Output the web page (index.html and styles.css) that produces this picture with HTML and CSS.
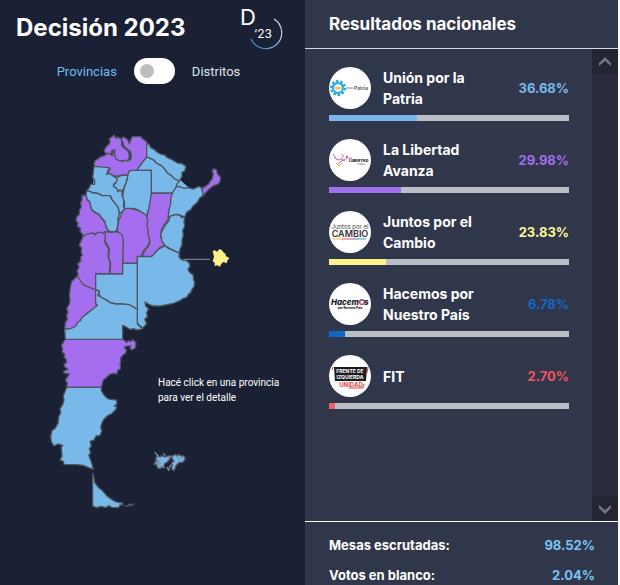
FILE: index.html
```
<!DOCTYPE html>
<html lang="es">
<head>
  <meta charset="UTF-8" />
  <meta name="viewport" content="width=device-width, initial-scale=1.0" />
  <title>Decisión 2023</title>
  <link rel="stylesheet" href="styles.css">
</head>
<body>
  <div class="container">
    <section class="map-panel">
      <header class="map-header">
        <h1>Decisión 2023</h1>
        <svg class="brand" viewBox="0 0 42 42" width="42" height="42" role="img" aria-label="D 23">
          <defs>
            <linearGradient id="ring" x1="0" y1="1" x2="1" y2="0">
              <stop offset="0" stop-color="#2f7fd0" />
              <stop offset="1" stop-color="#e4edf8" />
            </linearGradient>
          </defs>
          <path d="M33 11A16 16 0 1 1 10 31" fill="none" stroke="url(#ring)" stroke-width="1.2" />
          <text x="-1" y="17" class="brand-d">D</text>
          <text x="13" y="30" class="brand-year">‘23</text>
        </svg>
      </header>

      <div class="switch-row">
        <label for="view-switch" class="active">Provincias</label>
        <input type="checkbox" id="view-switch" class="switch" />
        <label for="view-switch">Distritos</label>
      </div>

      <div class="map-area">
        <svg class="map" viewBox="-6 15 570 1155" width="190" height="385">
          <!-- relleno bajo las uniones entre provincias -->
          <path class="base" d="M136 132L240 132 290 64 385 160 430 200 393 270 386 370 400 480 262 530 218 600 60 600 90 480 112 340 94 300 122 220z" />
          <g class="lla">
            <!-- Jujuy, Salta -->
            <path d="M166 84l-4-6 6-12 10-10 2-6-2-10 8-4 6-6 6 10 6-4 8 6 4 4-2 12 4 8 8 6 10 8 2 16-3 8-7 4-10-2-8 4-10-4-8-4-4-10 0-18-4 6-2 12z" />
            <path d="M214 40l6-4 8 4 6 6 4 10 6-16 4-5 24 0 6 6 12 9v46l-30 40-22 2-6 14-14-2-20 4-14-4-10-2 4-14 2-4-46-4-2-10 4-10 8-4 6-6 14-4 8-8 16 8 2-12 4-6 0 18 4 10 8 4 10 4 8-4 10 2 7-4 3-8-2-16-10-8-8-6-4-8z" />
            <!-- Misiones -->
            <path d="M456 190l10-6 9-6 6-10 5-5 4-16-4-10 6-6 8 4 2 11 9 10 0 8-3 10-10 6-8 2-10 8-12 12-8 10-6-10z" />
            <!-- San Juan -->
            <path d="M108 210l4 16 8 6 2 14 4 10 10 8 12 6 8 12 8 8 4 14 6 14 0 4-12 2-8 4-6-4-10 8-6-6-12 2-10 2-10 8-2-10-8-8 2-10-10-6 2-10-6-8 2-10 8-8 0-12 6-10-2-12 4-10 0-12z" />
            <!-- Córdoba, San Luis -->
            <path d="M222 250l18 0 12 4 14 2 8 6 8 2 10 8 6 14-4 10 4 14 0 12 4 18-4 12-10 18-8 8-6 16h-12v21h-44v-65l-14-20-2-20 4-24 6-12z" />
            <path d="M164 320l18 2 22-2 12 10 4 15-2 70v32h-38l2-32-6-20 2-23-6-14-6-8z" />
            <!-- Mendoza -->
            <path d="M98 336l10-8 10-2 12-2 6 6 6-8 10 0 6 4 6-6 2 16-2 14 6 14 6 8-2 23 6 20-2 32h-41v48l-20-8-18-8-10-14-8-10 4-8-4-8 6-14-4-8 10-10-2-10 6-6-4-10 2-12-8-8 4-8z" />
            <!-- Santa Fe -->
            <path d="M304 204h68l-4 14 0 14-6 14 0 16-4 14-8 14-10 12-6 14-2 14 4 18 9 14-14 4-6 6-20 22h-29l10-20 10-10 4-14-6-24 0-14-4-14 4-10-4-10 4-20 4-28z" />
            <!-- Neuquén -->
            <path d="M82 453l8 12 10 15 37 15v42l5 6-12 10-14 8-12 10-10 12-4 8-10 14-8 2-6 8-12-4-10 2 2-20 6-10-2-12 4-10-4-10 8-14 2-10-2-14 2-20 4-22z" />
            <!-- Chubut -->
            <path d="M46 643h174l10 10 4-6 10 2 4-6 10 10-2 16-10 6-6-4 2-8-10 0-10 4 8 8-4 10-8 6-6 8 0 12-2 8 2 12-8 4-4 12-10-2-12 4-10 10-8 6-6 22H50l2-12-6-10 6-8 6-10-14-2-4-6 14-6-10-8-2-8 8-4-2-10-6-6 2-10-8-6 2-10-4-10z" />
          </g>
          <g class="up">
            <!-- Formosa, Chaco -->
            <path d="M290 52l8 8 4 8 12 6 8 8 12 6 10 2 8 8 14 6 16 10 14 2 12 8-4 14-8 4 0 12-8 14-14-6-10-10-12-8-10-14-8-8-16-8-6-8-12-6-10-4z" />
            <path d="M290 96l10 4 12 6 6 8 16 8 8 8 10 14 12 8 10 10 14 6-8 10-2 12-6 14h-68v-68h-44z" />
            <!-- Santiago del Estero, Tucumán -->
            <path d="M238 138l6-2h60v68l-4 28-4 20-6 20-10-8-8-4-10-6-12-4-10 0-18 0 2-14-6-20 4-26 8-22 2-16z" />
            <path d="M196 154l10 2 6-4 22-2-4 18-6 14-4 10-4 10-6-6-4 6-6-10-10-6 2-8 6-4 0-8-4-6z" />
            <!-- Catamarca, La Rioja -->
            <path d="M132 124l46 4-6 14-2 6 10-2 8 6 6 4 8 6-2 8-8 6-2 8 10 6 4 10 6-6 6 6 0 12 4 8 2 12-2 10 4 10-8 8-8 6-2-12-4-10-8-10-8-10-6-12-10 0-14 0-6-4-12-4-10 0-6-4-12-2 8-10 4-10 12 0 0-12-6-8z" />
            <path d="M110 198l12 2 6 4 10 0 12 4 6 4 14 0 10 0 6 12 8 10 8 10 4 10 2 14-4 12 0 16-4 20-6 4-12 0-8-4-6-14-4-14-8-8-8-12-12-6-10-8-4-10-2-14-8-6-4-16z" />
            <!-- Corrientes, Entre Ríos -->
            <path d="M380 184l12 2 10 4 12-2 16 4 10-4 6-4 8 4 4 14 0 10-8 6-8 14-12 10-8 12-12 8-6 14-14-6-12-2-24 8 4-26 4-14 0-14 6-20z" />
            <path d="M360 274l18-6 12 4 6 6 8-2-2 14 2 14-6 12 2 14-4 16 0 14-6 12-2 12-12-6-14-6-17-10-9-14-4-20 6-14 10-16 8-10z" />
            <!-- Buenos Aires, La Pampa -->
            <path d="M262 395h43l20-22 8-4 12-6 12 8 14 6 17 8-2 10 10 10 14 2 8 8 2 8-6 10 4 8 12 10 0 10 4 12-2 12-6 8-4 10-6 4-6 10-12 4-8 6-20 8-18 4-22 4-20 0-12-4-13-8 2 12 9 8-6 12 2 12-8 8 6 12-6 8-6 5-8-6-8-8z" />
            <path d="M137 447h81v-32h44v138l-24-12-20-4-20 0-18-4-14-10-14-6-6-14 2-6-11-2z" />
            <!-- Río Negro -->
            <path d="M137 495l9 2 0 8-2 6 10 6 12 6 14 10 18 4 20 0 20 2 24 14v44l8 8 8 6-16 4-12-4-10 2-14-8-8-4v42H46l-2-30 18-2 8-4 8-4 6-12 8-4 4-10 14-10 10-8 22-18-5-6z" />
            <!-- Santa Cruz, Tierra del Fuego -->
            <path d="M50 787h104l0 10 6 10 10 12 10 4 20 2 0 14-8 4 8 2-2 8-14 14-10 4-14 14-6 14-2 10 4 8-6 14-12 2-6 12-12 4 4 14-6 8 4 12-6 8 8 20 6 22-16-6-14-6-20-2H42l-2-10-10-4 6-12-2-26 4-6-14-4-12 6-8-12-2-16 4-18 10-8 8-14 2-20 6-12-2-12 8-12 4-14-2-12z" />
            <path d="M128 1045l4 12 2 15 10 14 12 10 16 18 20 14 12 4 14 2 0 6-8 0-4 8-20 0-8-6-12 6-12-4-14 4-12-5z" />
            <path d="M226 1143l8-2 4-5 4 4 10-3-8 5-12 0z" />
            <!-- Malvinas -->
            <path d="M320 992l10 4 4-4 10 4 12-4 6 4-8 14-10 6-4 12-8-2-8 4-4-10-8-2 4-8 8-2-6-6z" />
            <path d="M366 994l10-6 6 4 6-4 6 6 8-2 4 10-8 10-10 0-10 10-6 16-8-8 4-10-4-6 8-6-6-6z" />
            <path class="islets" d="M314 982l12 12M316 1004l10 4-8 6 8 4 6-6M322 1024l8 6 6-6 8 4M340 984l6 10M352 1008l8-12 6-4M350 1026l6 10 4-14 6-2M380 992l8 12M390 1008l-8 6M394 994l2 10" />
          </g>
          <!-- Capital Federal -->
          <path class="guide" d="M400 403h80" />
          <path class="jxc" d="M488 378l6-2 8 4 6-8 8 4 4 6 6 4 2 8 10 5-6 8-2 8-10-4-6 6-4 8-8-4-8 2 0-10-6-4 4-14z" />
        </svg>
        <p class="hint">Hacé click en una provincia para ver el detalle</p>
      </div>
    </section>

    <section class="results-panel">
      <h2>Resultados nacionales</h2>

      <div class="results-body">
        <ul class="results">
          <li class="up">
            <div class="party">
              <svg class="logo" viewBox="0 0 42 42" width="42" height="42">
                <circle cx="21" cy="21" r="21" fill="#fff" />
                <circle cx="9" cy="21" r="7" fill="none" stroke="#1ba3de" stroke-width="2" stroke-dasharray="2.4 2" />
                <circle cx="9" cy="21" r="5" fill="none" stroke="#35aee3" stroke-width="2.4" />
                <ellipse cx="9" cy="21" rx="3" ry="1.6" fill="#f3c34b" />
                <path d="M17 21h7" stroke="#888" stroke-width="1" />
                <text x="25" y="23" font-size="5" font-weight="700" fill="#666">Patria</text>
              </svg>
              <span class="name">Unión por la Patria</span>
              <span class="percent">36.68%</span>
            </div>
            <div class="bar"><div class="fill" style="width: 36.68%"></div></div>
          </li>
          <li class="lla">
            <div class="party">
              <svg class="logo" viewBox="0 0 42 42" width="42" height="42">
                <circle cx="21" cy="21" r="21" fill="#fff" />
                <g fill="none" stroke-width="1">
                  <path d="M4 15l4 6 5-1 3 2" stroke="#a877d6" />
                  <path d="M5 19l6 2 4-4-3-2" stroke="#d58ac6" />
                  <path d="M8 26l4-4 3-1 4-3" stroke="#e8629a" />
                  <path d="M7 24l3 3 3-3" stroke="#f0a33c" />
                </g>
                <circle cx="18" cy="18" r="1.2" fill="#d9459c" />
                <text x="20" y="20" font-size="2" font-weight="700" fill="#222">LA</text>
                <text x="20" y="23" font-size="4" font-weight="800" fill="#222">LIBERTAD</text>
                <text x="28" y="26" font-size="2" fill="#444">AVANZA</text>
              </svg>
              <span class="name">La Libertad Avanza</span>
              <span class="percent">29.98%</span>
            </div>
            <div class="bar"><div class="fill" style="width: 29.98%"></div></div>
          </li>
          <li class="jxc">
            <div class="party">
              <svg class="logo" viewBox="0 0 42 42" width="42" height="42">
                <circle cx="21" cy="21" r="21" fill="#fff" />
                <text x="21" y="18" font-size="6" text-anchor="middle" fill="#444">Juntos por el</text>
                <text x="21" y="26" font-size="9" font-weight="600" text-anchor="middle" fill="#333">CAMBIO</text>
                <path d="M4 28h9" stroke="#f5b93c" />
                <path d="M13 28h8" stroke="#e8564c" />
                <path d="M21 28h8" stroke="#8a58b5" />
                <path d="M29 28h8" stroke="#38a3db" />
              </svg>
              <span class="name">Juntos por el Cambio</span>
              <span class="percent">23.83%</span>
            </div>
            <div class="bar"><div class="fill" style="width: 23.83%"></div></div>
          </li>
          <li class="hnp">
            <div class="party">
              <svg class="logo" viewBox="0 0 42 42" width="42" height="42">
                <circle cx="21" cy="21" r="21" fill="#fff" />
                <text x="2" y="22" font-size="8" font-weight="800" font-style="italic" fill="#1a1a1a">Hacem</text>
                <circle cx="33" cy="19" r="2.4" fill="none" stroke="#e2453c" stroke-width="1.4" />
                <path d="M31 18a2.4 2.4 0 0 1 4 0" fill="none" stroke="#2d8fd4" stroke-width="1.4" />
                <text x="35" y="22" font-size="8" font-weight="800" font-style="italic" fill="#1a1a1a">s</text>
                <text x="21" y="26" font-size="3" font-weight="800" text-anchor="middle" fill="#222">por Nuestro País</text>
              </svg>
              <span class="name">Hacemos por Nuestro País</span>
              <span class="percent">6.78%</span>
            </div>
            <div class="bar"><div class="fill" style="width: 6.78%"></div></div>
          </li>
          <li class="fit">
            <div class="party">
              <svg class="logo" viewBox="0 0 42 42" width="42" height="42">
                <circle cx="21" cy="21" r="21" fill="#fff" />
                <path d="M5 12h33l-1 14H6z" fill="#1c1c1f" />
                <path d="M4 12l-1 3M39 12l-1 6M35 29l-1 4H20" fill="none" stroke="#e04545" />
                <text x="21" y="18" font-size="5" font-weight="700" text-anchor="middle" fill="#fff">FRENTE DE</text>
                <text x="21" y="24" font-size="5" font-weight="700" text-anchor="middle" fill="#fff">IZQUIERDA</text>
                <text x="22" y="32" font-size="6" font-weight="700" text-anchor="middle" fill="#e04545">UNIDAD</text>
              </svg>
              <span class="name">FIT</span>
              <span class="percent">2.70%</span>
            </div>
            <div class="bar"><div class="fill" style="width: 2.7%"></div></div>
          </li>
        </ul>

        <div class="scroller">
          <button type="button" aria-label="Subir">
            <svg viewBox="0 0 14 12" width="14" height="12"><path d="M1 10V7l6-6 6 6v3L7 5z" /></svg>
          </button>
          <button type="button" aria-label="Bajar">
            <svg viewBox="0 0 14 12" width="14" height="12"><path d="M1 2v3l6 6 6-6V2L7 7z" /></svg>
          </button>
        </div>
      </div>

      <dl class="totals">
        <div class="total">
          <dt>Mesas escrutadas:</dt>
          <dd>98.52%</dd>
        </div>
        <div class="total">
          <dt>Votos en blanco:</dt>
          <dd>2.04%</dd>
        </div>
      </dl>
    </section>
  </div>
</body>
</html>
```
FILE: styles.css
```
* {
  box-sizing: border-box;
}

body {
  margin: 0;
  background-color: #fff;
  color: #fff;
  font-family: Inter, "Liberation Sans", sans-serif;
}

h1,
h2,
p,
ul,
dl,
dd {
  margin: 0;
  padding: 0;
}

.container {
  display: grid;
  grid-template-columns: 305fr 313fr;
  min-height: 100vh;
  margin-right: 2px;
}

/* map */
.map-panel {
  background-color: #1a2135;
}

.map-header {
  display: flex;
  justify-content: space-between;
  padding: 8px 22px 0 16px;
}

h1 {
  font-size: 24px;
  line-height: 40px;
  font-weight: 700;
}

.brand {
  fill: #fff;
  overflow: visible;
}

.brand-d {
  font-size: 22px;
}

.brand-year {
  font-size: 12px;
}

.switch-row {
  display: flex;
  justify-content: center;
  align-items: center;
  gap: 17px;
  margin: 8px 8px 0 0;
  font-family: Roboto, sans-serif;
  font-size: 13px;
}

.switch-row label {
  color: #dfe3ea;
}

.switch-row .active {
  color: #6fbcec;
}

.switch {
  appearance: none;
  display: flex;
  align-items: center;
  width: 41px;
  height: 26px;
  margin: 0;
  padding: 0 6px;
  border-radius: 13px;
  background-color: #fff;
  cursor: pointer;
}

.switch::before {
  content: "";
  width: 14px;
  height: 14px;
  border-radius: 50%;
  background-color: #bdbdbd;
}

.switch:checked {
  justify-content: flex-end;
}

.map-area {
  position: relative;
  padding: 46px 0 0 48px;
}

.map {
  display: block;
  stroke: #50545f;
  stroke-width: 4;
  stroke-linejoin: round;
}

.map path {
  cursor: pointer;
}

.map .base {
  fill: #78b9ea;
  stroke: none;
}

.map .up {
  fill: #78b9ea;
}

.map .lla {
  fill: #a56eee;
}

.map .jxc {
  fill: #fff08a;
  stroke: none;
}

.map .guide {
  stroke: #8b909c;
  stroke-width: 3;
}

.map .islets {
  fill: none;
  stroke: #7d8894;
}

.hint {
  position: absolute;
  left: 158px;
  top: 291px;
  width: 130px;
  font-family: Roboto, sans-serif;
  font-size: 10px;
  line-height: 15px;
}

/* results */
.results-panel {
  display: flex;
  flex-direction: column;
  background-color: #31374a;
}

h2 {
  padding: 0 24px;
  border-bottom: 1px solid #d5d8e4;
  font-size: 17px;
  line-height: 48px;
  font-weight: 700;
}

.results-body {
  display: flex;
  flex: 1;
}

.results {
  display: flex;
  flex: 1;
  flex-direction: column;
  gap: 18px;
  padding: 18px 23px 18px 24px;
  list-style: none;
}

.party {
  display: flex;
  align-items: center;
  gap: 12px;
  min-height: 42px;
  margin-bottom: 6px;
}

.logo {
  flex: none;
}

.name {
  flex: 1;
  max-width: 104px;
  font-size: 14px;
  line-height: 21px;
  font-weight: 700;
}

.percent {
  margin-left: auto;
  font-size: 13px;
  font-weight: 700;
}

.bar {
  height: 6px;
  background-color: #b9bfc4;
}

.fill {
  height: 100%;
}

.results .up .percent {
  color: #7ab8ef;
}

.results .up .fill {
  background-color: #7ab8e8;
}

.results .lla .percent {
  color: #a170ec;
}

.results .lla .fill {
  background-color: #a170ec;
}

.results .jxc .percent {
  color: #fff794;
}

.results .jxc .fill {
  background-color: #fff388;
}

.results .hnp .percent {
  color: #0f68c8;
}

.results .hnp .fill {
  background-color: #0f68c8;
}

.results .fit .percent {
  color: #f0545f;
}

.results .fit .fill {
  background-color: #f0606a;
}

.scroller {
  display: flex;
  flex-direction: column;
  justify-content: space-between;
  width: 26px;
  background-color: #2a2d3d;
}

.scroller button {
  display: flex;
  justify-content: center;
  align-items: center;
  height: 25px;
  padding: 0;
  border: none;
  background-color: #232532;
  cursor: pointer;
}

.scroller svg {
  fill: #74767e;
}

.totals {
  display: flex;
  flex-direction: column;
  gap: 10px;
  padding: 13px 23px 0 24px;
  border-top: 1px solid #fff;
  font-size: 13px;
  line-height: 20px;
  font-weight: 700;
}

.total {
  display: flex;
  justify-content: space-between;
}

.total dd {
  color: #7cc2f5;
}
```
